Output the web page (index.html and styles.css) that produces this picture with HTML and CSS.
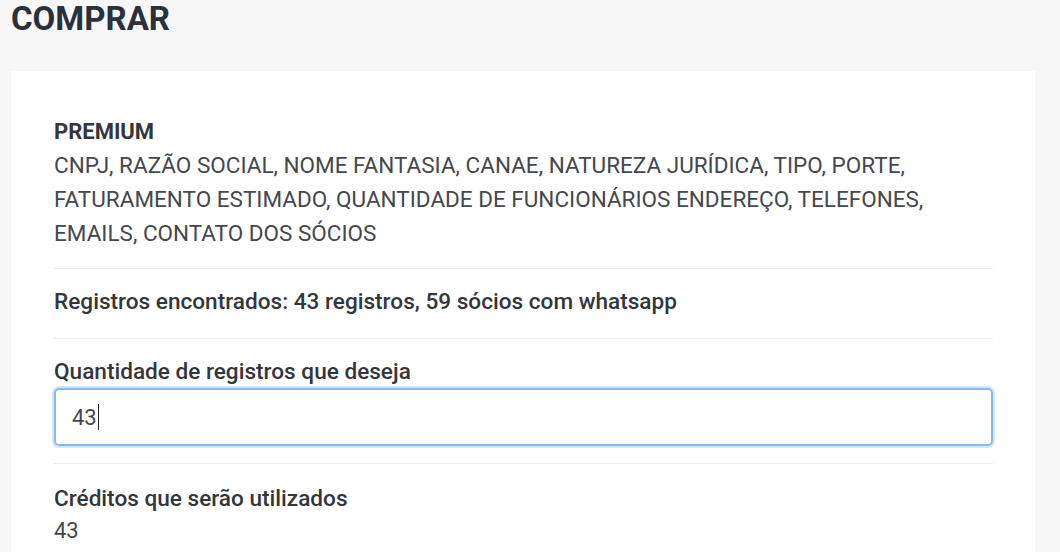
FILE: index.html
```html
<!DOCTYPE html>
<html lang="pt-BR">
<head>
<meta charset="utf-8">
<link rel="stylesheet" href="styles.css">
</head>
<body>
<div class="page">
  <h1 class="title">COMPRAR</h1>
  <div class="card">
    <section class="block">
      <div class="plan">PREMIUM</div>
      <p class="fields">CNPJ, RAZÃO SOCIAL, NOME FANTASIA, CANAE, NATUREZA JURÍDICA, TIPO, PORTE, FATURAMENTO ESTIMADO, QUANTIDADE DE FUNCIONÁRIOS ENDEREÇO, TELEFONES, EMAILS, CONTATO DOS SÓCIOS</p>
    </section>
    <section class="block found">Registros encontrados: 43 registros, 59 sócios com whatsapp</section>
    <section class="block">
      <label class="label" for="qtd">Quantidade de registros que deseja</label>
      <div class="input" id="qtd"><span>43</span><span class="caret"></span></div>
    </section>
    <section class="block last">
      <div class="label">Créditos que serão utilizados</div>
      <div class="value">43</div>
    </section>
  </div>
</div>
</body>
</html>
```
FILE: styles.css
```css
html, body { margin: 0; padding: 0; }
body {
  background: #f7f7f7;
  font-family: Roboto, "Liberation Sans", sans-serif;
  color: #3f4246;
  width: 1060px;
  height: 552px;
  overflow: hidden;
}
.page {
  box-sizing: border-box;
  height: 552px;
  padding: 0 25px 0 11px;
  display: flex;
  flex-direction: column;
}
.title {
  margin: 0;
  font-size: 33px;
  font-weight: 700;
  line-height: 38px;
  color: #29313d;
}
.card {
  flex: 1;
  min-height: 0;
  overflow: hidden;
  margin-top: 33px;
  background: #fff;
  padding: 47px 42px 0 43px;
}
.block {
  border-bottom: 1px solid #ececec;
}
.block.last { border-bottom: none; }
.plan {
  font-size: 22px;
  font-weight: 700;
  line-height: 28px;
  color: #33363a;
}
.fields {
  margin: 2px 0 0;
  padding: 0 0 18px;
  font-size: 22.5px;
  line-height: 34px;
  font-weight: 400;
  color: #45484c;
}
.found {
  padding: 18px 0 21px;
  font-size: 22.6px;
  font-weight: 500;
  line-height: 30px;
  color: #33363a;
}
.label {
  display: block;
  padding-top: 18px;
  font-size: 22.6px;
  font-weight: 500;
  line-height: 30px;
  color: #33363a;
}
.last .label { padding-top: 20px; }
.block .input {
  box-sizing: border-box;
  margin: 1px 0 17px;
  height: 58px;
  border: 2px solid #86b9f0;
  border-radius: 5px;
  box-shadow: 0 0 0 2px rgba(160, 200, 245, 0.45);
  display: flex;
  align-items: center;
  padding-left: 16px;
  font-size: 22px;
  color: #45484c;
}
.caret {
  display: inline-block;
  width: 1px;
  height: 26px;
  background: #222;
  margin-left: 1px;
}
.value {
  font-size: 22px;
  line-height: 34px;
  color: #45484c;
}
```
